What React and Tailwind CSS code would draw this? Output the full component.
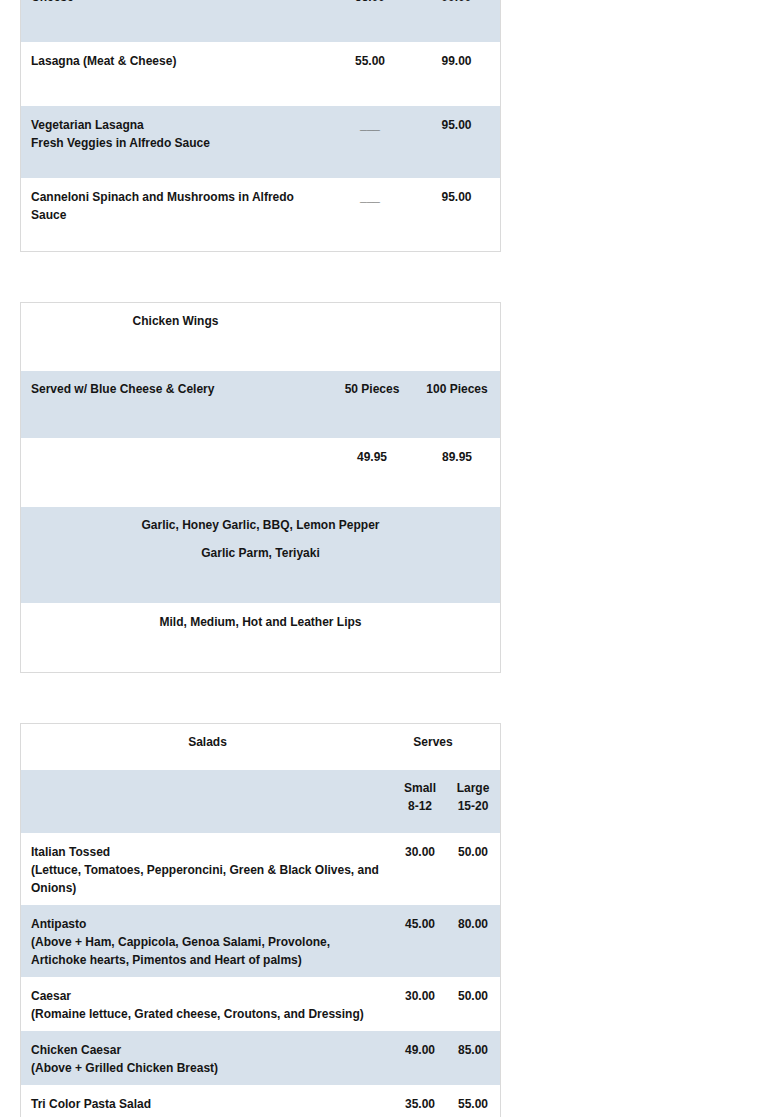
import React from 'react';

const pasta = [
  { name: ['Cheese'], small: '55.00', large: '99.00', h: 'h-[64px]', bg: 'bg-[#d7e1eb]' },
  { name: ['Lasagna (Meat & Cheese)'], small: '55.00', large: '99.00', h: 'h-[64px]', bg: 'bg-white' },
  { name: ['Vegetarian Lasagna', 'Fresh Veggies in Alfredo Sauce'], small: '___', large: '95.00', h: 'h-[72px]', bg: 'bg-[#d7e1eb]' },
  { name: ['Canneloni Spinach and Mushrooms in Alfredo Sauce'], small: '___', large: '95.00', h: 'h-[73px]', bg: 'bg-white' },
];

const salads = [
  { name: 'Italian Tossed', desc: '(Lettuce, Tomatoes, Pepperoncini, Green & Black Olives, and Onions)', small: '30.00', large: '50.00', h: 'h-[72px]', bg: 'bg-white' },
  { name: 'Antipasto', desc: '(Above + Ham, Cappicola, Genoa Salami, Provolone, Artichoke hearts, Pimentos and Heart of palms)', small: '45.00', large: '80.00', h: 'h-[72px]', bg: 'bg-[#d7e1eb]' },
  { name: 'Caesar', desc: '(Romaine lettuce, Grated cheese, Croutons, and Dressing)', small: '30.00', large: '50.00', h: 'h-[54px]', bg: 'bg-white' },
  { name: 'Chicken Caesar', desc: '(Above + Grilled Chicken Breast)', small: '49.00', large: '85.00', h: 'h-[54px]', bg: 'bg-[#d7e1eb]' },
  { name: 'Tri Color Pasta Salad', desc: '', small: '35.00', large: '55.00', h: 'h-[54px]', bg: 'bg-white' },
];

const Table = ({ className = '', children }) => (
  <div className={`ml-[20px] w-[481px] border border-[#dadada] ${className}`}>{children}</div>
);

export default function App() {
  return (
    <div className="min-h-screen bg-white pb-10 font-['Liberation_Sans',Arial,sans-serif] text-[12px] font-bold leading-[18px] text-[#151515]">
      {/* Pasta */}
      <Table className="-mt-[23px]">
        {pasta.map((row, i) => (
          <div key={i} className={`grid grid-cols-[306px_86px_87px] pt-[10px] ${row.h} ${row.bg}`}>
            <div className="pl-[10px] pr-[12px]">
              {row.name.map((line, j) => (
                <div key={j}>{line}</div>
              ))}
            </div>
            <div className={`text-center ${row.small === '___' ? 'text-[#555]' : ''}`}>{row.small}</div>
            <div className="text-center">{row.large}</div>
          </div>
        ))}
      </Table>

      {/* Chicken Wings */}
      <Table className="mt-[50px]">
        <div className="grid h-[68px] grid-cols-[309px_84px_86px] bg-white pt-[9px]">
          <div className="text-center">Chicken Wings</div>
          <div />
          <div />
        </div>
        <div className="grid h-[67px] grid-cols-[309px_84px_86px] bg-[#d7e1eb] pt-[9px]">
          <div className="pl-[10px]">Served w/ Blue Cheese &amp; Celery</div>
          <div className="text-center">50 Pieces</div>
          <div className="text-center">100 Pieces</div>
        </div>
        <div className="grid h-[69px] grid-cols-[309px_84px_86px] bg-white pt-[10px]">
          <div />
          <div className="text-center">49.95</div>
          <div className="text-center">89.95</div>
        </div>
        <div className="flex h-[96px] flex-col items-center gap-[10px] bg-[#d7e1eb] pt-[9px]">
          <p>Garlic, Honey Garlic, BBQ, Lemon Pepper</p>
          <p>Garlic Parm, Teriyaki</p>
        </div>
        <div className="h-[69px] bg-white pt-[10px] text-center">Mild, Medium, Hot and Leather Lips</div>
      </Table>

      {/* Salads */}
      <Table className="mt-[50px]">
        <div className="grid h-[46px] grid-cols-[373px_106px] bg-white pt-[9px]">
          <div className="text-center">Salads</div>
          <div className="pr-[28px] text-center">Serves</div>
        </div>
        <div className="grid h-[63px] grid-cols-[373px_52px_54px] bg-[#d7e1eb] pt-[9px]">
          <div />
          <div className="text-center">
            <div>Small</div>
            <div>8-12</div>
          </div>
          <div className="text-center">
            <div>Large</div>
            <div>15-20</div>
          </div>
        </div>
        {salads.map((s, i) => (
          <div key={i} className={`grid grid-cols-[373px_52px_54px] pt-[10px] ${s.h} ${s.bg}`}>
            <div className="pl-[10px] pr-[11px]">
              <div>{s.name}</div>
              {s.desc && <div>{s.desc}</div>}
            </div>
            <div className="text-center">{s.small}</div>
            <div className="text-center">{s.large}</div>
          </div>
        ))}
      </Table>
    </div>
  );
}
